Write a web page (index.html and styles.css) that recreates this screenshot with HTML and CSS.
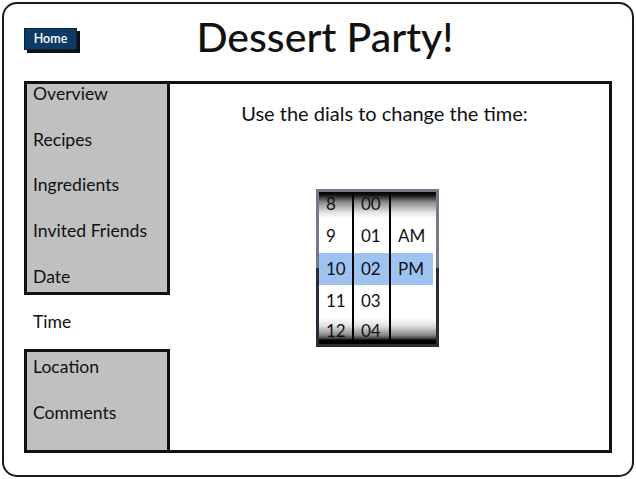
FILE: index.html
```html
<!DOCTYPE html>
<html>
<head>
<meta charset="utf-8">
<link rel="stylesheet" href="styles.css">
</head>
<body>
<div class="frame">
  <div class="header">
    <div class="home-wrap"><div class="home">Home</div></div>
    <h1 class="title">Dessert Party!</h1>
    <div></div>
  </div>
  <div class="main">
    <div class="tabs">
      <div class="group group-top">
        <div class="tab">Overview</div>
        <div class="tab">Recipes</div>
        <div class="tab">Ingredients</div>
        <div class="tab">Invited Friends</div>
        <div class="tab">Date</div>
      </div>
      <div class="tab-active">Time</div>
      <div class="group group-bottom">
        <div class="tab">Location</div>
        <div class="tab">Comments</div>
      </div>
    </div>
    <div class="panel">
      <p class="prompt">Use the dials to change the time:</p>
      <div class="picker">
        <div class="dial dial-hour">
          <div class="cell">8</div>
          <div class="cell">9</div>
          <div class="cell sel">10</div>
          <div class="cell">11</div>
          <div class="cell">12</div>
        </div>
        <div class="dial dial-min">
          <div class="cell">00</div>
          <div class="cell">01</div>
          <div class="cell sel">02</div>
          <div class="cell">03</div>
          <div class="cell">04</div>
        </div>
        <div class="dial dial-ampm">
          <div class="cell"></div>
          <div class="cell">AM</div>
          <div class="cell sel">PM</div>
          <div class="cell"></div>
          <div class="cell"></div>
        </div>
      </div>
    </div>
  </div>
</div>
</body>
</html>
```

FILE: styles.css
```css
html, body {
  margin: 0;
  padding: 0;
  background: #fff;
}
body {
  font-family: Lato, "Open Sans", sans-serif;
  color: #111;
}
.frame {
  box-sizing: border-box;
  margin: 2px 0 0 2px;
  width: 632px;
  height: 475px;
  border: 2px solid #1a1a1a;
  border-radius: 15px;
  padding: 0 20px 22px 20px;
}
.header {
  height: 77px;
  display: grid;
  grid-template-columns: 1fr auto 1fr;
  align-items: start;
}
.home-wrap {
  padding-top: 24px;
}
.home {
  width: 53px;
  height: 22px;
  background: #0e3a66;
  color: #fff;
  font-size: 12.5px;
  font-weight: 600;
  line-height: 20px;
  text-align: center;
  box-shadow: 3px 3px 0 #111;
  border: 1px solid #0a2440;
  box-sizing: border-box;
}
.title {
  margin: 0;
  padding: 10px 0 0 14px;
  font-size: 41px;
  font-weight: 500;
  line-height: 46px;
  color: #111;
  letter-spacing: 0;
}
.main {
  display: flex;
  height: 372px;
}
.tabs {
  width: 146px;
  display: flex;
  flex-direction: column;
}
.group {
  box-sizing: border-box;
  border: 3px solid #111;
  background: #c0c0c0;
  display: flex;
  flex-direction: column;
}
.group-top {
  height: 214px;
  gap: 25.7px;
}
.group-bottom {
  height: 104px;
  padding-top: 5px;
  gap: 26px;
}
.tab {
  font-size: 17.6px;
  line-height: 20px;
  padding-left: 6px;
  white-space: nowrap;
}
.tab-active {
  height: 54px;
  display: flex;
  align-items: center;
  padding-left: 9px;
  font-size: 17.6px;
  line-height: 20px;
  background: #fff;
}
.panel {
  flex: 1;
  box-sizing: border-box;
  border: 3px solid #111;
  border-left: none;
  display: flex;
  flex-direction: column;
  align-items: center;
}
.prompt {
  margin: 18px 10px 0 0;
  font-size: 20px;
  line-height: 22px;
}
.picker {
  margin-top: 65px;
  margin-right: 24px;
  width: 123px;
  height: 158px;
  box-sizing: border-box;
  padding: 3px;
  background: linear-gradient(to bottom, #78788a 0, #78788a 50%, #2b2b38 50%, #2b2b38 100%);
  display: flex;
}
.dial {
  height: 152px;
  overflow: hidden;
  background: linear-gradient(to bottom, #000 0, #111 3px, #888 10px, #e8e8e8 21px, #fff 27px, #fff 126px, #e0e0e0 134px, #8a8a8a 143px, #333 147px, #000 148px, #000 152px);
  display: flex;
  flex-direction: column;
}
.dial-hour {
  width: 33px;
  border-right: 2px solid #000;
}
.dial-min {
  width: 35px;
  border-right: 2px solid #000;
}
.dial-ampm {
  flex: 1;
}
.cell {
  flex: none;
  height: 32.5px;
  line-height: 32.5px;
  padding-left: 7px;
  font-size: 17px;
  color: #111;
}
.cell:first-child {
  margin-top: -4.5px;
}
.cell:last-child {
  margin-top: -3px;
}
.sel {
  background: #9fc3f1;
}
.dial-ampm .sel {
  margin-right: 3px;
}
```
